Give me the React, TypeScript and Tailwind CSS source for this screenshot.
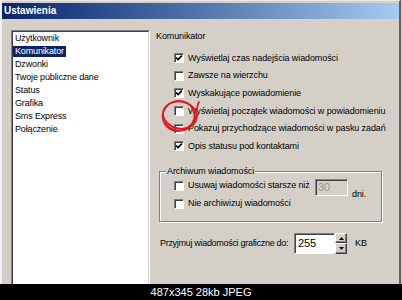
import React from "react";

const F = "font-['Liberation_Sans',Arial,sans-serif]";

function Check({ checked }: { checked?: boolean }) {
  return (
    <span className="w-[10px] h-[10px] bg-white border border-t-[#808080] border-l-[#808080] border-b-white border-r-white shadow-[inset_1px_1px_0_#404040] flex items-center justify-center shrink-0">
      {checked && (
        <svg width="8" height="8" viewBox="0 0 8 8">
          <path d="M1.2 3.6 L3.1 5.6 L6.9 1.6" stroke="#000" strokeWidth="1.6" fill="none" />
        </svg>
      )}
    </span>
  );
}

function Row({ checked, label }: { checked?: boolean; label: string }) {
  return (
    <div className="h-[17.6px] flex items-center gap-[4px] whitespace-nowrap">
      <Check checked={checked} />
      <span className="leading-[11px]">{label}</span>
    </div>
  );
}

const items = [
  "Użytkownik",
  "Komunikator",
  "Dzwonki",
  "Twoje publiczne dane",
  "Status",
  "Grafika",
  "Sms Express",
  "Połączenie",
];

export default function App() {
  return (
    <div className={`w-[402px] h-[300px] bg-[#d4d0c8] flex flex-col overflow-hidden ${F} text-black`}>
      <div className="h-[284px] w-[401px] shrink-0 flex flex-col border-l-2 border-l-[#f2f0ec] border-r-2 border-r-[#606060] border-t border-t-[#ece9e4] overflow-hidden relative">
        <div className="mt-[2px] h-[16px] bg-linear-to-r from-[#0a246a] to-[#a6caf0] flex items-center pl-[2px] shrink-0">
          <span className="text-white font-bold text-[10px] leading-none">Ustawienia</span>
        </div>
        <div className="flex flex-1 mt-[11px]">
          <div className="ml-[9px] w-[139px] h-[270px] shrink-0 border-t border-l border-t-[#808080] border-l-[#808080] border-r border-r-white">
            <div className="h-full bg-white border-t border-l border-t-[#404040] border-l-[#404040] border-r border-r-[#d4d0c8] text-[9px] tracking-[-0.15px] flex flex-col">
              {items.map((it, i) => (
                <div key={it} className="h-[13px] flex items-center whitespace-nowrap">
                  <span
                    className={
                      i === 1
                        ? "px-[2px] leading-[11px] bg-[#0a246a] text-white"
                        : "px-[2px] leading-[11px]"
                    }
                  >
                    {it}
                  </span>
                </div>
              ))}
            </div>
          </div>
          <div className="flex-1 flex flex-col pl-[6px] text-[9px] tracking-[-0.1px]">
            <div className="h-[12px] leading-[12px]">Komunikator</div>
            <div className="mt-[7.5px] flex flex-col pl-[18px]">
              <Row checked label="Wyświetlaj czas nadejścia wiadomości" />
              <Row label="Zawsze na wierzchu" />
              <Row checked label="Wyskakujące powiadomienie" />
              <Row label="Wyświetlaj początek wiadomości w powiadomieniu" />
              <Row label="Pokazuj przychodzące wiadomości w pasku zadań" />
              <Row checked label="Opis statusu pod kontaktami" />
            </div>
            <div className="relative mt-[15.9px] ml-[3px] w-[223px] h-[51px] shrink-0 border border-[#808080] shadow-[inset_1px_1px_0_#fff,1px_1px_0_#fff] pl-[14px] pt-[5px] flex flex-col">
              <span className="absolute -top-[6px] left-[6px] px-[1px] bg-[#d4d0c8] leading-[11px] whitespace-nowrap">
                Archiwum wiadomości
              </span>
              <div className="h-[18px] flex items-center whitespace-nowrap">
                <Check />
                <span className="ml-[4px] w-[127px] shrink-0 leading-[11px]">Usuwaj wiadomości starsze niż</span>
                <div className="mt-[3px] w-[33px] h-[17px] shrink-0 bg-[#d4d0c8] border border-t-[#808080] border-l-[#808080] border-b-white border-r-white shadow-[inset_1px_1px_0_#404040] flex items-center pl-[2px] text-[11px] text-[#909090]">
                  30
                </div>
                <span className="ml-[4px] mt-[18px] leading-[11px]">dni.</span>
              </div>
              <div className="h-[18px] flex items-center gap-[4px] whitespace-nowrap">
                <Check />
                <span className="leading-[11px]">Nie archiwizuj wiadomości</span>
              </div>
            </div>
            <div className="mt-[11px] ml-[4px] h-[21px] flex items-center whitespace-nowrap">
              <span className="w-[134px] shrink-0 leading-[11px] tracking-[-0.3px]">Przyjmuj wiadomości graficzne do:</span>
              <div className="w-[41px] h-[21px] shrink-0 bg-white border border-t-[#808080] border-l-[#808080] border-b-white border-r-white shadow-[inset_1px_1px_0_#404040] flex items-center pl-[3px] text-[11px]">
                255
              </div>
              <div className="w-[12px] h-[21px] shrink-0 flex flex-col">
                <div className="flex-1 bg-[#d4d0c8] border border-t-white border-l-white border-b-[#404040] border-r-[#404040] shadow-[inset_-1px_-1px_0_#808080] flex items-center justify-center">
                  <svg width="5" height="3" viewBox="0 0 5 3">
                    <path d="M2.5 0 L5 3 L0 3 Z" fill="#000" />
                  </svg>
                </div>
                <div className="flex-1 bg-[#d4d0c8] border border-t-white border-l-white border-b-[#404040] border-r-[#404040] shadow-[inset_-1px_-1px_0_#808080] flex items-center justify-center">
                  <svg width="5" height="3" viewBox="0 0 5 3">
                    <path d="M0 0 L5 0 L2.5 3 Z" fill="#000" />
                  </svg>
                </div>
              </div>
              <span className="ml-[8px] leading-[11px]">KB</span>
            </div>
          </div>
        </div>
        <svg
          className="absolute left-[156px] top-[94px] pointer-events-none"
          width="46"
          height="42"
          viewBox="0 0 46 42"
        >
          <g stroke="#e01822" strokeWidth="1.7" fill="none" strokeLinecap="round">
            <ellipse cx="20.5" cy="21" rx="16" ry="15" transform="rotate(-15 20.5 21)" />
            <ellipse cx="22" cy="20" rx="17" ry="13.5" transform="rotate(12 22 20)" />
            <path d="M7 27 C 11 37, 30 39, 36 27 C 40 19, 38 11, 41 7" />
          </g>
        </svg>
      </div>
      <div className="flex-1 bg-black flex items-center justify-center text-white text-[11px] leading-none">
        487x345 28kb JPEG
      </div>
    </div>
  );
}
